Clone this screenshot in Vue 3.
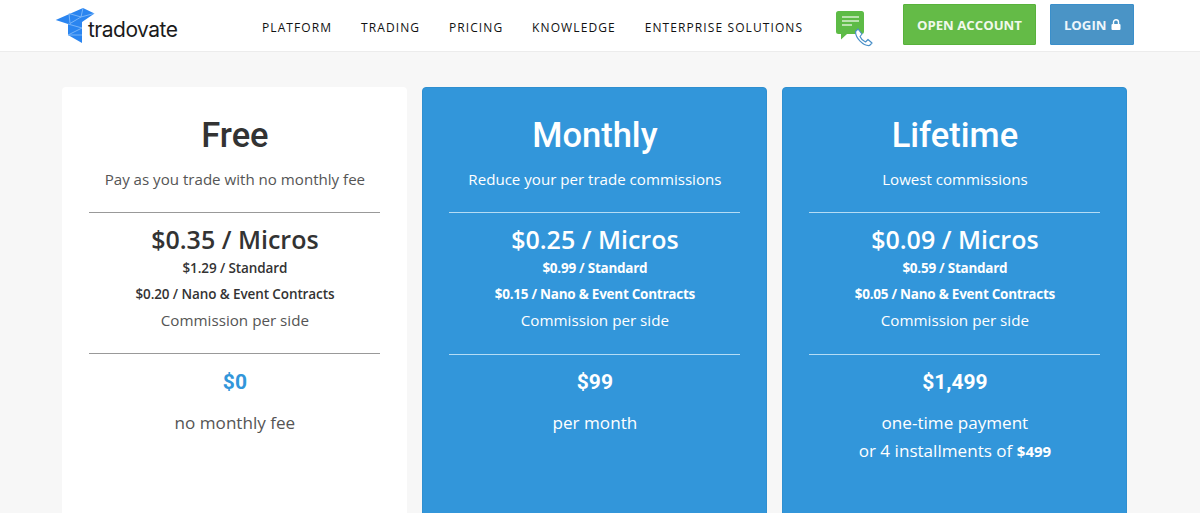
<script setup>
const plans = [
  { key: 'free', title: 'Free', sub: 'Pay as you trade with no monthly fee', micros: '$0.35 / Micros', std: '$1.29 / Standard', nano: '$0.20 / Nano & Event Contracts', price: '$0', notes: ['no monthly fee'] },
  { key: 'blue', title: 'Monthly', sub: 'Reduce your per trade commissions', micros: '$0.25 / Micros', std: '$0.99 / Standard', nano: '$0.15 / Nano & Event Contracts', price: '$99', notes: ['per month'] },
  { key: 'blue', title: 'Lifetime', sub: 'Lowest commissions', micros: '$0.09 / Micros', std: '$0.59 / Standard', nano: '$0.05 / Nano & Event Contracts', price: '$1,499', notes: ['one-time payment'], extra: true },
]
const nav = ['PLATFORM', 'TRADING', 'PRICING', 'KNOWLEDGE', 'ENTERPRISE SOLUTIONS']
</script>

<template>
  <div class="page">
    <header class="top">
      <div class="logo">
        <svg class="mark" width="40" height="36" viewBox="0 0 40 36">
          <polygon points="0.700,12 28,0 39.500,5.500 27,14 27,35 13,27 13,16" fill="#2a85f0"/>
          <path d="M14 5.500L15 15.500M14 5.500L26 9M26 9L15 15.500M28 0L26 9M26 9L39 5.500M13 16L27 20M27 20L13 27M13 27L27 27" stroke="#8cc0fa" stroke-width="0.8" fill="none"/>
        </svg>
        <span class="word">tradovate</span>
      </div>
      <nav class="nav"><a v-for="n in nav" :key="n">{{ n }}</a></nav>
      <svg class="chat" width="38" height="36" viewBox="0 0 38 36">
        <path d="M2.500 0h23a2.500 2.500 0 0 1 2.500 2.500v18a2.500 2.500 0 0 1-2.500 2.500H11l-6 5.500V23H2.500A2.500 2.500 0 0 1 0 20.500v-18A2.500 2.500 0 0 1 2.500 0z" fill="#5dbb46"/>
        <path d="M6 6h17M6 10h17M6 14h10" stroke="#d8f0d0" stroke-width="1.5" fill="none"/>
        <path d="M22 18l4 5-2 2.500c1 2.500 3 4.500 5.500 5.500l2.500-2.500 4 3.500-2.500 2.500C27 35 19.500 27 19.500 20.500z" fill="#fff" stroke="#4a90c8" stroke-width="1.2" stroke-linejoin="round"/>
      </svg>
      <a class="btn green">OPEN ACCOUNT</a>
      <a class="btn blue">LOGIN
        <svg width="10" height="11" viewBox="0 0 10 11"><path d="M2.500 5V3.200a2.500 2.500 0 0 1 5 0V5" fill="none" stroke="#fff" stroke-width="1.4"/><rect x="0.500" y="5" width="9" height="6" rx="1" fill="#fff"/></svg>
      </a>
    </header>
    <main class="cards">
      <section v-for="p in plans" :key="p.title" class="card" :class="p.key">
        <h2>{{ p.title }}</h2>
        <p class="sub">{{ p.sub }}</p>
        <hr>
        <div class="micros">{{ p.micros }}</div>
        <div class="small first">{{ p.std }}</div>
        <div class="small">{{ p.nano }}</div>
        <div class="side">Commission per side</div>
        <hr class="second">
        <div class="price">{{ p.price }}</div>
        <div v-for="n in p.notes" :key="n" class="note">{{ n }}</div>
        <div v-if="p.extra" class="note alt">or 4 installments of <b>$499</b></div>
      </section>
    </main>
  </div>
</template>

<style>
html, body { margin: 0; height: 513px; overflow: hidden; background: #f7f7f7; }
</style>

<style scoped>
.page { height: 513px; overflow: hidden; background: #f7f7f7; font-family: "Open Sans", sans-serif; }
.top { height: 51px; background: #fff; border-bottom: 1px solid #ececec; display: flex; align-items: flex-start; }
.logo { margin: 8px 0 0 55px; width: 124px; display: flex; align-items: flex-start; }
.mark { flex: none; }
.word { font-family: Inter, sans-serif; font-size: 21px; letter-spacing: -0.5px; color: #1b1b1b; margin: 9px 0 0 -7px; line-height: 26px; }
.nav { display: flex; gap: 28.800px; margin: 20px 0 0 83px; }
.nav a { font-size: 12px; line-height: 16px; letter-spacing: 1.1px; color: #111; font-weight: 500; white-space: nowrap; }
.chat { margin: 11px 0 0 32.500px; }
.btn { box-sizing: border-box; height: 41px; display: flex; align-items: center; justify-content: center; gap: 4px; color: #fff; font-weight: 700; font-size: 13.200px; border-radius: 1px; }
.green { width: 133.500px; margin: 4px 0 0 29px; background: #64bb47; border: 1px solid #58b23b; color: #f1f9ec; }
.blue { width: 84px; margin: 4px 0 0 14px; background: #4a94c6; border: 1px solid #3a8fcb; color: #eef6fb; }
.cards { display: flex; gap: 15px; padding: 35px 0 0 62.400px; }
.card { box-sizing: border-box; width: 345px; height: 440px; border-radius: 4px; padding: 26px 27px 0; text-align: center; }
.free { background: #fff; color: #555; }
.card.blue { background: #3296da; color: #fff; margin: 0; border: 1px solid #2f8fd0; padding: 25px 26px 0; }
h2 { margin: 0; font-family: Roboto, sans-serif; font-weight: 500; font-size: 34.500px; line-height: 44px; }
.free h2 { color: #333; }
.sub { margin: 10px 0 0; font-size: 15.100px; line-height: 24px; white-space: nowrap; }
hr { border: 0; height: 1px; margin: 21px 0 0; background: #999; }
.blue hr { background: #b5dcf5; }
.micros { margin-top: 9px; font-size: 25px; font-weight: 600; line-height: 34px; }
.free .micros { color: #333; }
.small { font-size: 13.500px; font-weight: 700; line-height: 18px; margin-top: 8px; white-space: nowrap; letter-spacing: -0.25px; }
.small.first { margin-top: 3px; }
.free .small { color: #333; font-weight: 600; letter-spacing: -0.1px; }
.side { font-size: 15.200px; line-height: 22px; margin-top: 6px; }
hr.second { margin-top: 22px; }
.blue hr.second { margin-top: 23px; }
.price { font-family: Roboto, sans-serif; font-weight: 700; font-size: 21px; line-height: 28px; margin-top: 14px; }
.blue .price { margin-top: 13px; }
.free .price { color: #3296da; }
.note { font-size: 17.100px; line-height: 28px; margin-top: 13px; }
.note.alt { margin-top: 0; }
.note b { font-size: 15px; }
</style>
